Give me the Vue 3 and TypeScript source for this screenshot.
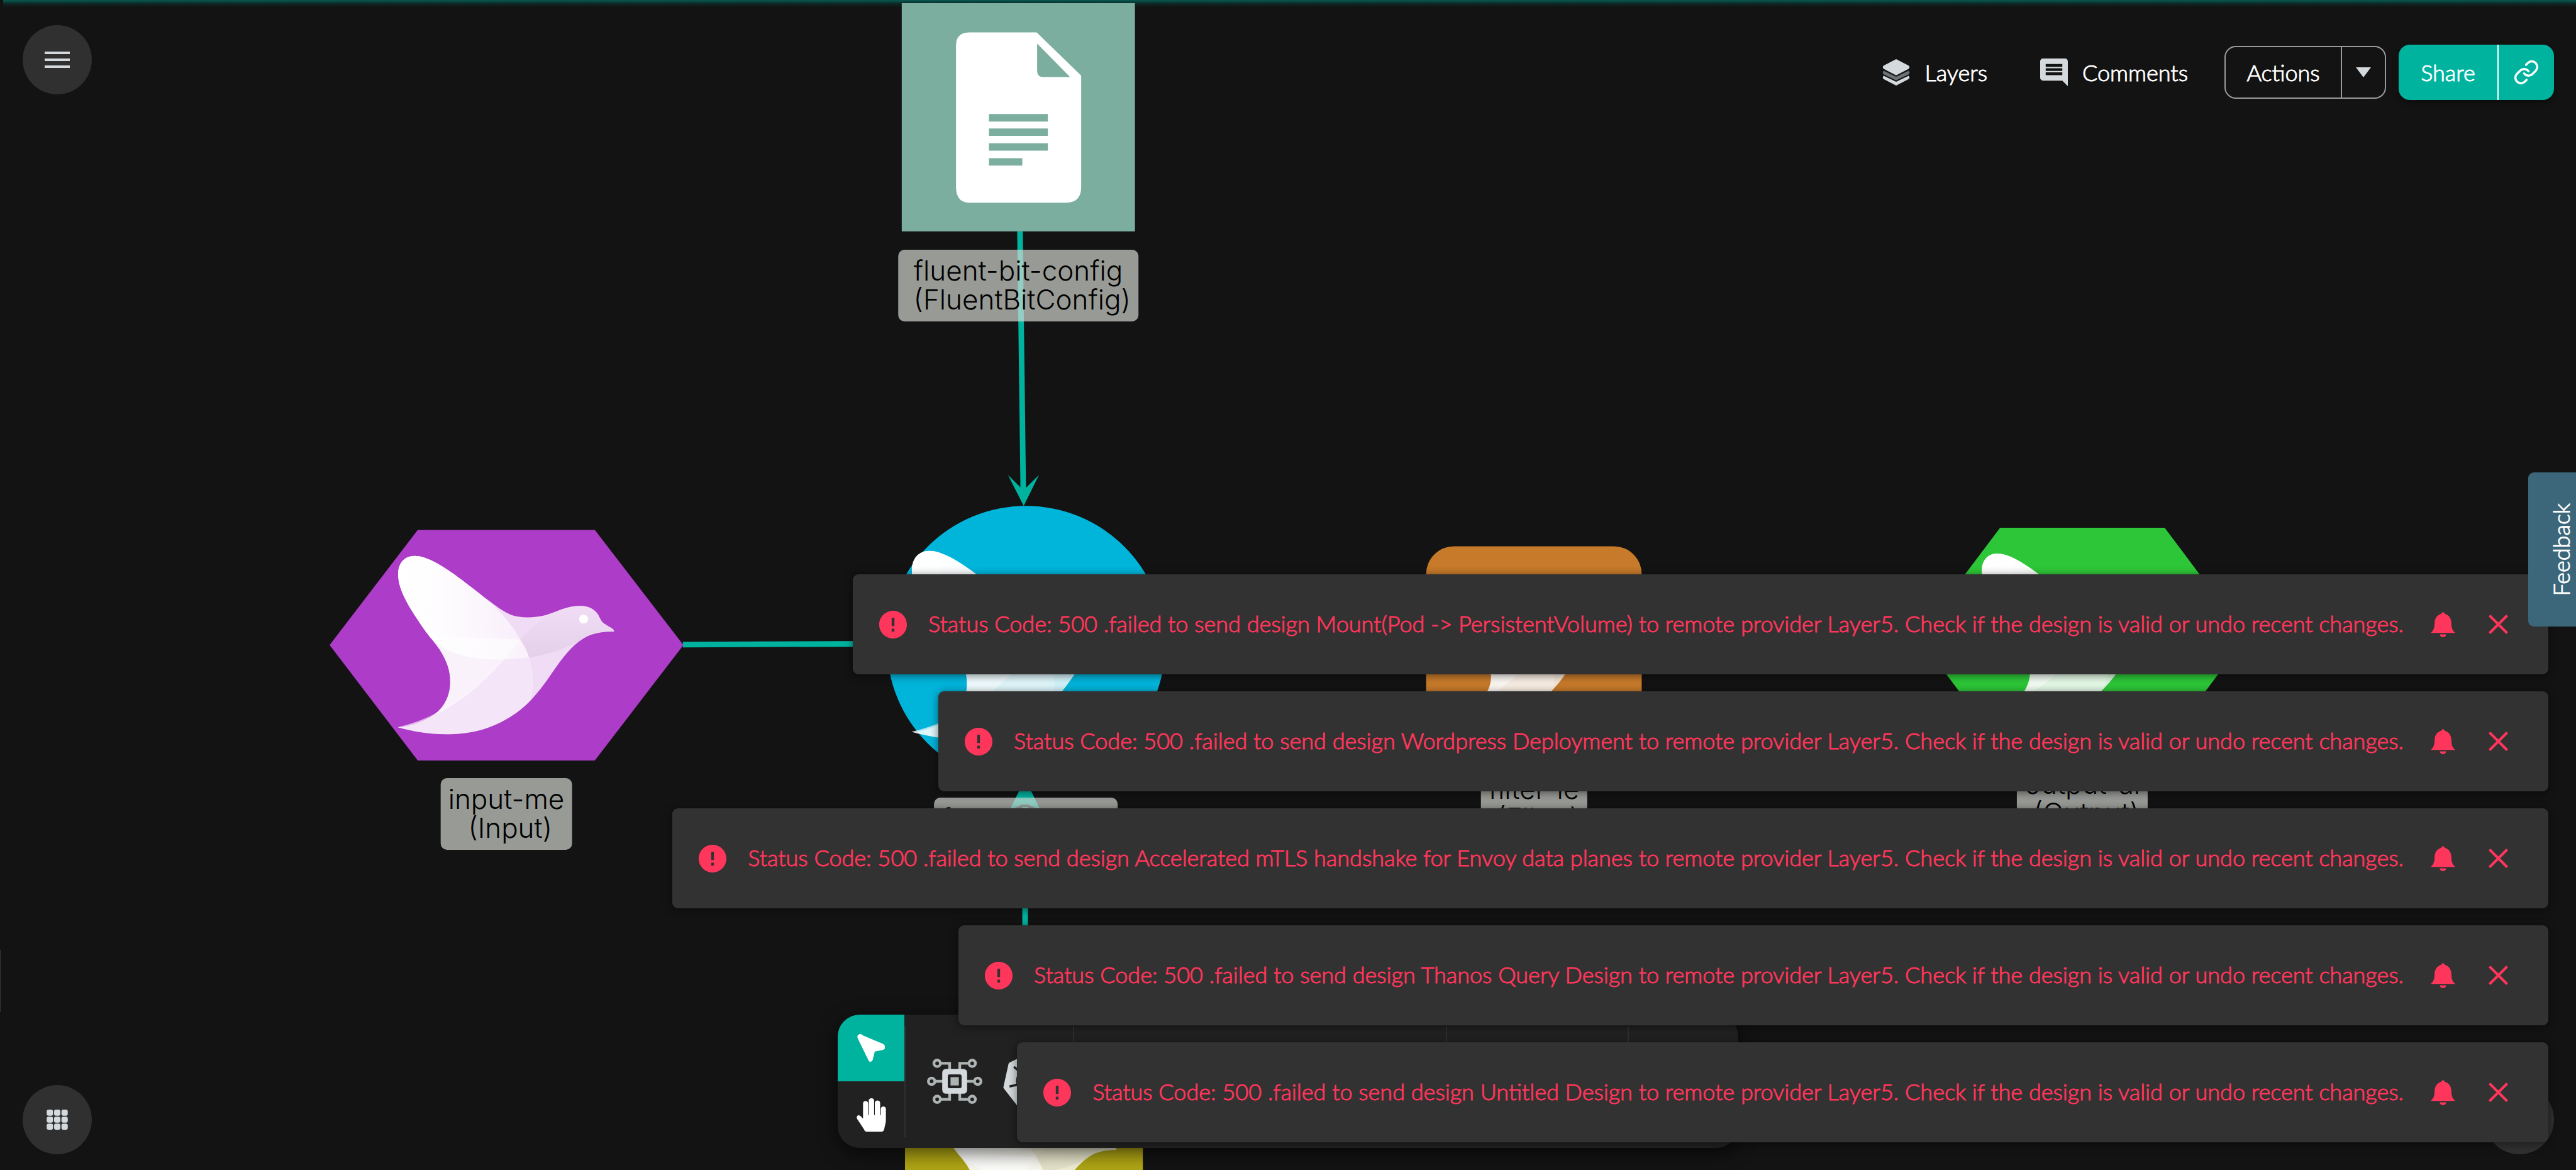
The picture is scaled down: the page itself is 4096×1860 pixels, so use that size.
<script setup lang="ts">
interface DesignNode {
  id: string
  kind?: string
  labelX: number
  labelY: number
}

interface Toast {
  id: number
  design: string
}

const nodes: DesignNode[] = [
  { id: 'fluent-bit-config', kind: 'FluentBitConfig', labelX: 1619, labelY: 397 },
  { id: 'input-me', kind: 'Input', labelX: 805, labelY: 1237 },
  { id: 'fluent-bit-me', labelX: 1631, labelY: 1268 },
  { id: 'filter-le', kind: 'Filter', labelX: 2439, labelY: 1221 },
  { id: 'output-al', kind: 'Output', labelX: 3311, labelY: 1213 },
]

const toasts: Toast[] = [
  { id: 1, design: 'Mount(Pod -> PersistentVolume)' },
  { id: 2, design: 'Wordpress Deployment' },
  { id: 3, design: 'Accelerated mTLS handshake for Envoy data planes' },
  { id: 4, design: 'Thanos Query Design' },
  { id: 5, design: 'Untitled Design' },
]

const message = (toast: Toast): string =>
  `Status Code: 500 .failed to send design ${toast.design} to remote provider Layer5. Check if the design is valid or undo recent changes.`

const spokes = [0, 1, 2, 3, 4, 5, 6].map((i) => (i * 360) / 7)
</script>

<template>
  <main class="app">
    <div class="glow"></div>

    <section class="canvas" aria-label="Design canvas">
      <svg class="graph" aria-hidden="true">
        <defs>
          <linearGradient id="wing" x1="0" x2="1" y1="0" y2="0">
            <stop offset="0" stop-color="#fff" stop-opacity="1" />
            <stop offset="0.25" stop-color="#fff" stop-opacity="0.96" />
            <stop offset="1" stop-color="#fff" stop-opacity="0.5" />
          </linearGradient>
          <linearGradient id="body" x1="0" x2="0" y1="0" y2="1">
            <stop offset="0" stop-color="#000" stop-opacity="0" />
            <stop offset="1" stop-color="#000" stop-opacity="0.05" />
          </linearGradient>
          <g id="bird">
            <g transform="scale(0.574 0.5102) translate(-770.5 -611)">
              <path fill="#fff" fill-opacity="0.82" d="M364 312C364 265 388 234 426 234C468 234 520 268 575 312C625 353 660 385 700 420C735 448 760 471 790 484C830 498 870 497 920 484C960 470 1000 445 1047 445C1080 445 1105 460 1117 485C1125 503 1128 513 1142 523C1160 537 1177 543 1176 554C1130 554 1095 562 1070 577C1025 605 990 650 945 725C915 775 890 812 858 850C810 905 760 934 715 955C665 978 605 988 543 988C480 988 420 977 364 959C410 955 455 938 500 905C540 872 560 820 560 768C560 720 548 680 520 630C490 580 450 530 415 465C385 410 364 360 364 312Z" />
              <path fill="url(#body)" d="M950 472C980 460 1010 445 1047 445C1080 445 1105 460 1117 485C1125 503 1128 513 1142 523C1160 537 1177 543 1176 554C1130 554 1095 562 1060 585C1000 625 930 652 856 663C848 635 838 612 823 588C855 545 900 500 950 472Z" />
              <path fill="#fff" fill-opacity="0.28" d="M364 959C500 925 680 800 823 588C850 640 872 700 872 768C872 800 866 830 858 850C810 905 760 934 715 955C665 978 605 988 543 988C480 988 420 977 364 959Z" />
              <path fill="#fff" fill-opacity="0.62" d="M364 959C410 955 455 938 500 905C540 872 560 820 560 768C560 720 548 680 520 630L480 572L823 588C680 800 520 925 364 959Z" />
              <path fill="url(#wing)" d="M364 312C364 265 388 234 426 234C468 234 520 268 575 312C625 353 660 385 700 420C760 480 800 540 823 588C838 612 848 635 856 663C700 685 560 670 484 578C460 545 440 510 415 465C385 410 364 360 364 312Z" />
              <path fill="none" stroke="#fff" stroke-opacity="0.6" stroke-width="2" d="M364 959C500 925 640 830 760 673" />
              <ellipse cx="1061" cy="501" rx="17" ry="19" fill="#fff" />
            </g>
          </g>
        </defs>

        <g transform="scale(0.7372)">
          <rect x="1945" y="-4" width="503" height="503" fill="#7bae9e" />
          <path fill="#fff" fill-rule="evenodd" d="M2091 70H2236L2332 163V403Q2332 437 2300 437H2091Q2062 437 2062 403V98Q2062 70 2091 70ZM2237 94V152Q2237 166 2249 166H2308ZM2133 246V262H2260V246ZM2133 277V293H2260V277ZM2133 309V325H2260V309ZM2133 341V357H2205V341Z" />

          <path d="M2200 499L2207 1055" stroke="#00b39f" stroke-width="12" />
          <path d="M1473 1390L1960 1388" stroke="#00b39f" stroke-width="12" />

          <path d="M711 1391L901 1143H1283L1474 1391L1283 1640H901Z" fill="#ad3cc8" />
          <use href="#bird" transform="translate(1092 1391)" />

          <circle cx="2213" cy="1391" r="300" fill="#00b4da" />
          <use href="#bird" transform="translate(2213 1391) scale(1.055)" />
          <path fill="#00b39f" d="M2174 1024L2202 1052H2213L2241 1024L2208 1091Z" />

          <rect x="3076" y="1178" width="465" height="441" rx="60" fill="#c67a2a" />
          <use href="#bird" transform="translate(3308 1398) scale(0.76)" />

          <path d="M4137 1373L4314 1138H4669L4845 1373L4669 1608H4314Z" fill="#2dc638" />
          <use href="#bird" transform="translate(4491 1372) scale(0.927)" />

          <path d="M2211 2250V1740" stroke="#00b39f" stroke-width="12" />
          <path fill="#00b39f" d="M2211 1680L2245 1748L2217 1735H2205L2177 1748Z" />

          <rect x="1952" y="2248" width="513" height="513" fill="#b0a615" />
          <use href="#bird" transform="translate(2209 2505) scale(0.856)" />
        </g>
      </svg>

      <p
        v-for="node in nodes"
        :key="node.id"
        class="node-label"
        :style="{ left: node.labelX + 'px', top: node.labelY + 'px' }"
      >
        {{ node.id }}<template v-if="node.kind"><br />&nbsp;({{ node.kind }})</template>
      </p>
    </section>

    <button class="round menu" aria-label="Open menu">
      <svg viewBox="0 0 40 26" width="40" height="26">
        <path d="M0 2H40M0 13H40M0 24H40" stroke="#d3d9dc" stroke-width="4" />
      </svg>
    </button>

    <header class="topbar">
      <button class="plain">
        <svg viewBox="0 0 60 57" width="44" height="42">
          <path fill="#d3d9dc" d="M30 0L57 14Q61 17 57 21L30 35L3 21Q-1 17 3 14Z" />
          <path fill="#6e7173" d="M3 25L30 38L57 25Q61 29 57 33L30 46L3 33Q-1 29 3 25Z" />
          <path fill="#d3d9dc" d="M3 36L30 49L57 36Q61 40 57 43L30 57L3 43Q-1 40 3 36Z" />
        </svg>
        Layers
      </button>
      <button class="plain">
        <svg viewBox="2 2 20 20" width="44" height="44">
          <path fill="#d3d9dc" d="M21.99 4c0-1.1-.89-2-1.99-2H4c-1.1 0-2 .9-2 2v12c0 1.1.9 2 2 2h14l4 4zM18 14H6v-2h12zm0-3H6V9h12zm0-3H6V6h12z" />
        </svg>
        Comments
      </button>
      <div class="group actions">
        <button class="main">Actions</button>
        <button class="side" aria-label="More actions">
          <svg viewBox="0 0 24 16" width="24" height="16"><path d="M0 0H24L12 16Z" fill="#d3d9dc" /></svg>
        </button>
      </div>
      <div class="group share">
        <button class="main">Share</button>
        <button class="side" aria-label="Copy link">
          <svg viewBox="0 0 24 24" width="42" height="42" fill="none" stroke="#fff" stroke-width="2" stroke-linecap="round">
            <path d="M10 13a5 5 0 0 0 7.54.54l3-3a5 5 0 0 0-7.07-7.07l-1.72 1.71" />
            <path d="M14 11a5 5 0 0 0-7.54-.54l-3 3a5 5 0 0 0 7.07 7.07l1.71-1.71" />
          </svg>
        </button>
      </div>
    </header>

    <span class="drawer-edge"></span>

    <nav class="dock" aria-label="Tools">
      <div class="modes">
        <button class="mode active" aria-label="Select">
          <svg viewBox="0 0 60 60" width="44" height="44">
            <path fill="#fff" d="M7 0C9 0 11 1 13 3L56 21C62 25 62 32 56 34L38 38L34 55C32 61 26 62 24 56L1 9C-1 4 2 0 7 0Z" />
          </svg>
        </button>
        <button class="mode" aria-label="Pan">
          <svg viewBox="0 0 64 72" width="47" height="53">
            <path fill="#fff" d="M21 72C18 72 17 69 16 67L1 44C-1 40 2 36 6 37C9 38 11 41 14 44V11C14 4 25 4 25 11V36H26.500V5C26.500 -2 38 -2 38 5V36H39.500V10C39.500 3 51 3 51 10V36H52.500V23C52.500 16 63.500 16 63.500 23V46C63.500 54 61 60 60 66C59 70 58 72 54 72Z" />
          </svg>
        </button>
      </div>
      <div class="tools shapes">
        <button class="tool" aria-label="Components">
          <svg viewBox="0 0 120 98" width="88" height="72">
            <g fill="none" stroke="#adb3b3" stroke-width="6">
              <circle cx="22" cy="10" r="7" /><circle cx="98" cy="10" r="7" />
              <circle cx="10" cy="49" r="7" /><circle cx="110" cy="49" r="7" />
              <circle cx="22" cy="88" r="7" /><circle cx="98" cy="88" r="7" />
              <path d="M29 10H49V24M91 10H71V24M17 49H34M103 49H86M29 88H49V74M91 88H71V74" />
            </g>
            <path fill="#d3d9dc" fill-rule="evenodd" d="M42 22H78Q87 22 87 31V67Q87 76 78 76H42Q33 76 33 67V31Q33 22 42 22ZM49 34Q45 34 45 38V60Q45 64 49 64H71Q75 64 75 60V38Q75 34 71 34Z" />
            <rect x="51" y="40" width="18" height="18" fill="#adb3b3" />
          </svg>
        </button>
        <button class="tool" aria-label="Kubernetes">
          <svg viewBox="-64 -64 128 128" width="94" height="94">
            <path fill="#d3d9dc" stroke="#d3d9dc" stroke-width="8" stroke-linejoin="round" d="M0 -60L47 -37L58 13L26 54H-26L-58 13L-47 -37Z" />
            <g fill="none" stroke="#212121" stroke-width="5">
              <circle r="32" />
              <path v-for="angle in spokes" :key="angle" d="M0 0V-50" :transform="`rotate(${angle})`" />
            </g>
          </svg>
        </button>
      </div>
      <div class="tools drawing"></div>
      <div class="tools history"></div>
      <div class="tools extra"></div>
    </nav>

    <button class="round apps" aria-label="Apps">
      <svg viewBox="0 0 45 43" width="34" height="32" fill="#d3d9dc">
        <template v-for="row in 3" :key="row">
          <rect v-for="col in 3" :key="col" :x="(col - 1) * 15.8" :y="(row - 1) * 15" width="13.4" height="13" rx="4" />
        </template>
      </svg>
    </button>
    <button class="round help" aria-label="Help"></button>

    <div class="toasts" role="status">
      <div v-for="toast in toasts" :key="toast.id" class="toast">
        <svg class="alert" viewBox="2 2 20 20" width="44" height="44">
          <path fill="#ff365b" d="M12 2C6.480 2 2 6.480 2 12s4.480 10 10 10 10-4.480 10-10S17.520 2 12 2m1 15h-2v-2h2zm0-4h-2V7h2z" />
        </svg>
        <span class="message">{{ message(toast) }}</span>
        <button class="icon" aria-label="Notifications">
          <svg viewBox="0 0 53 54" width="39" height="40" fill="#ff365b">
            <path d="M26.500 0C28.500 0 30 1.500 30 3.500C39 6 44 13 44.500 22C45 32 45 38 53 45H0C8 38 8 32 8.500 22C9 13 14 6 23 3.500C23 1.500 24.500 0 26.500 0Z" />
            <path d="M19.500 48H33.500C33 52 30 54 26.500 54C23 54 20 52 19.500 48Z" />
          </svg>
        </button>
        <button class="icon" aria-label="Close">
          <svg viewBox="0 0 42 42" width="31" height="31">
            <path d="M2 2L40 40M40 2L2 40" stroke="#ff365b" stroke-width="5.500" />
          </svg>
        </button>
      </div>
    </div>

    <button class="feedback"><span>Feedback</span></button>
  </main>
</template>

<style>
body {
  margin: 0;
  background: #131313;
}
</style>

<style scoped>
.app {
  position: relative;
  min-height: 100vh;
  overflow: hidden;
  background: #131313;
  color: #fff;
  font-family: Lato, "Liberation Sans", sans-serif;
  font-size: 36px;
  font-weight: 300;
  -webkit-text-stroke: 1px currentColor;
}

button {
  display: flex;
  align-items: center;
  justify-content: center;
  margin: 0;
  padding: 0;
  border: 0;
  background: none;
  color: inherit;
  font: inherit;
}

svg {
  flex: none;
}

.glow {
  position: absolute;
  inset: 0 0 auto 5px;
  height: 12px;
  background: linear-gradient(#055b51, #0a3f39 3px, #0f211f 7px, #131313);
}

.canvas {
  position: absolute;
  inset: 0;
}

.graph {
  position: absolute;
  inset: 0;
  width: 100%;
  height: 100%;
  clip-path: inset(5px 0 0 0);
}

.node-label {
  position: absolute;
  margin: 0;
  padding: 10px 12px 12px;
  border-radius: 10px;
  transform: translateX(-50%);
  background: rgba(215, 218, 212, 0.68);
  color: #000;
  font-family: Inter, "Liberation Sans", sans-serif;
  font-size: 44px;
  line-height: 46px;
  text-align: center;
  white-space: nowrap;
  -webkit-text-stroke: 0;
}

.round {
  position: absolute;
  width: 110px;
  height: 110px;
  border-radius: 50%;
  background: #303030;
}

.menu {
  top: 40px;
  left: 36px;
}

.apps {
  bottom: 25px;
  left: 36px;
}

.help {
  right: 35px;
  bottom: 25px;
}

.topbar {
  position: absolute;
  top: 71px;
  right: 35px;
  display: flex;
  align-items: center;
  height: 88px;
}

.plain {
  gap: 23px;
  margin-right: 84px;
}

.plain + .plain {
  margin-right: 58px;
}

.group {
  display: flex;
  overflow: hidden;
  border-radius: 18px;
}

.actions {
  height: 80px;
  margin-right: 20px;
  border: 2px solid #9a9a9a;
}

.actions .main {
  width: 185px;
  border-right: 2px solid #9a9a9a;
}

.actions .side {
  width: 68px;
}

.share {
  height: 88px;
  background: #00b39f;
  box-shadow: 0 4px 10px rgba(0, 0, 0, 0.4);
}

.share .main {
  width: 159px;
  border-right: 2px solid #fff;
}

.share .side {
  width: 88px;
}

.drawer-edge {
  position: absolute;
  bottom: 251px;
  left: 0;
  width: 1px;
  height: 99px;
  background: #2e3840;
}

.dock {
  position: absolute;
  bottom: 35px;
  left: 50%;
  display: flex;
  align-items: center;
  height: 212px;
  overflow: hidden;
  transform: translateX(-50%);
  border-radius: 35px;
  background: #212121;
  box-shadow: 0 8px 30px rgba(0, 0, 0, 0.6);
}

.modes {
  width: 106px;
}

.mode {
  width: 106px;
  height: 106px;
}

.mode.active {
  background: #00b39f;
}

.tools {
  box-sizing: border-box;
  display: flex;
  align-items: center;
  height: 177px;
  border-left: 2px solid #303030;
}

.shapes {
  gap: 32px;
  width: 268px;
  padding-left: 34px;
}

.drawing {
  width: 593px;
}

.history {
  width: 289px;
}

.extra {
  width: 176px;
}

.toasts {
  position: absolute;
  right: 44px;
  bottom: 44px;
  display: flex;
  flex-direction: column;
  align-items: flex-end;
  gap: 27px;
}

.toast {
  box-sizing: border-box;
  display: flex;
  align-items: center;
  height: 159px;
  padding: 0 36px 0 42px;
  border-radius: 9px;
  background: #323232;
  box-shadow: 0 2px 14px rgba(0, 0, 0, 0.5);
  color: #ff365b;
}

.message {
  padding: 0 18px 4px 34px;
  white-space: nowrap;
}

.icon {
  width: 88px;
  height: 88px;
}

.feedback {
  position: absolute;
  top: 751px;
  right: 0;
  width: 76px;
  height: 245px;
  padding-left: 28px;
  border-radius: 9px 0 0 9px;
  background: #3c677a;
}

.feedback span {
  writing-mode: vertical-rl;
  transform: rotate(180deg);
}
</style>
